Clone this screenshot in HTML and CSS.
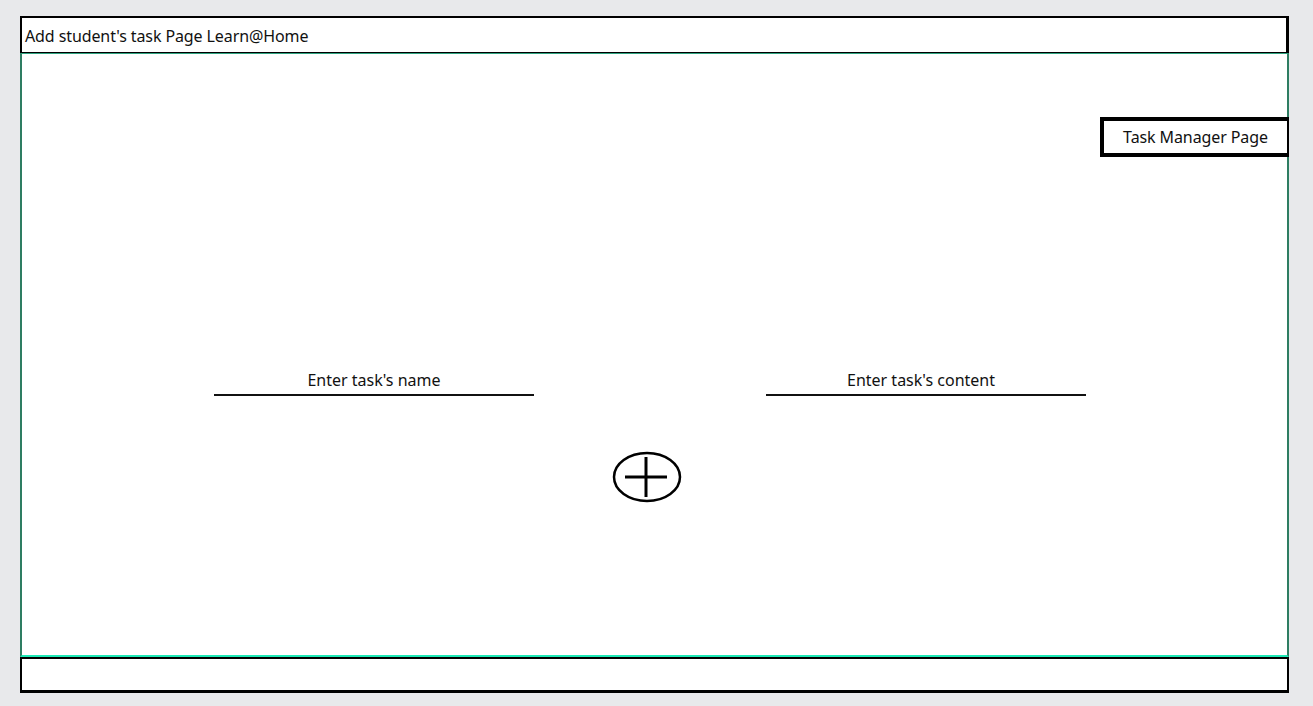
FILE: index.html
```html
<!DOCTYPE html>
<html lang="en">
<head>
  <meta charset="UTF-8">
  <meta name="viewport" content="width=device-width, initial-scale=1.0">
  <title>Add student's task Page Learn@Home</title>
  <link rel="stylesheet" href="styles.css">
</head>
<body>
  <div class="page">
    <!-- Header -->
    <div class="header">Add student's task Page Learn@Home</div>

    <!-- Main -->
    <div class="main">
      <div class="nav-row">
        <button class="nav-button">Task Manager Page</button>
      </div>

      <div class="fields">
        <label class="field">
          <input type="text" placeholder="Enter task's name">
        </label>
        <label class="field field-content">
          <input type="text" placeholder="Enter task's content">
        </label>
      </div>

      <div class="add-row">
        <button class="add-button" aria-label="Add task">
          <svg width="72" height="54" viewBox="0 0 72 54">
            <ellipse cx="35" cy="26" rx="33" ry="24" fill="none" stroke="#000" stroke-width="2.5"/>
            <line x1="13" y1="26" x2="55" y2="26" stroke="#000" stroke-width="3"/>
            <line x1="34" y1="6" x2="34" y2="46" stroke="#000" stroke-width="3"/>
          </svg>
        </button>
      </div>
    </div>

    <!-- Footer -->
    <div class="footer"></div>
  </div>
</body>
</html>
```

FILE: styles.css
```css
body {
  margin: 0;
  background: #e8e9eb;
  font-family: 'Noto Sans', sans-serif;
  color: #111;
}

.page {
  width: 1269px;
  margin: 16px 0 0 20px;
}

.header {
  height: 34px;
  background: #ffffff;
  border: 2px solid #000;
  border-right-width: 3px;
  border-bottom-width: 1px;
  padding: 0 0 0 3px;
  font-size: 16px;
  line-height: 37px;
  letter-spacing: -0.1px;
}

.main {
  height: 601px;
  background: #ffffff;
  border-top: 1px solid #2fa37f;
  border-left: 2px solid #2e7d62;
  border-right: 2px solid #2e7d62;
  border-bottom: 2px solid #1de9b6;
}

.nav-row {
  display: flex;
  justify-content: flex-end;
  padding-top: 63px;
}

.nav-button {
  width: 189px;
  height: 40px;
  margin-right: -2px;
  background: #ffffff;
  border: 4px solid #000;
  border-right-width: 2px;
  font-family: 'Noto Sans', sans-serif;
  font-size: 16px;
  color: #111;
  letter-spacing: -0.1px;
  padding: 0;
}

.fields {
  display: flex;
  gap: 232px;
  padding: 211px 0 0 192px;
}

.field input {
  width: 320px;
  height: 24px;
  border: none;
  border-bottom: 2px solid #111;
  padding: 0 0 2px 0;
  background: transparent;
  text-align: center;
  font-family: 'Noto Sans', sans-serif;
  font-size: 16px;
  letter-spacing: 0;
}

.field-content input {
  width: 310px;
  padding-right: 10px;
}

.field input::placeholder {
  color: #111;
  opacity: 1;
}

.add-row {
  display: flex;
  padding: 55px 0 0 590px;
}

.add-button {
  background: none;
  border: none;
  padding: 0;
  display: block;
}

.add-button svg {
  display: block;
}

.footer {
  height: 31px;
  background: #ffffff;
  border: 2px solid #000;
  border-bottom-width: 3px;
}
```
